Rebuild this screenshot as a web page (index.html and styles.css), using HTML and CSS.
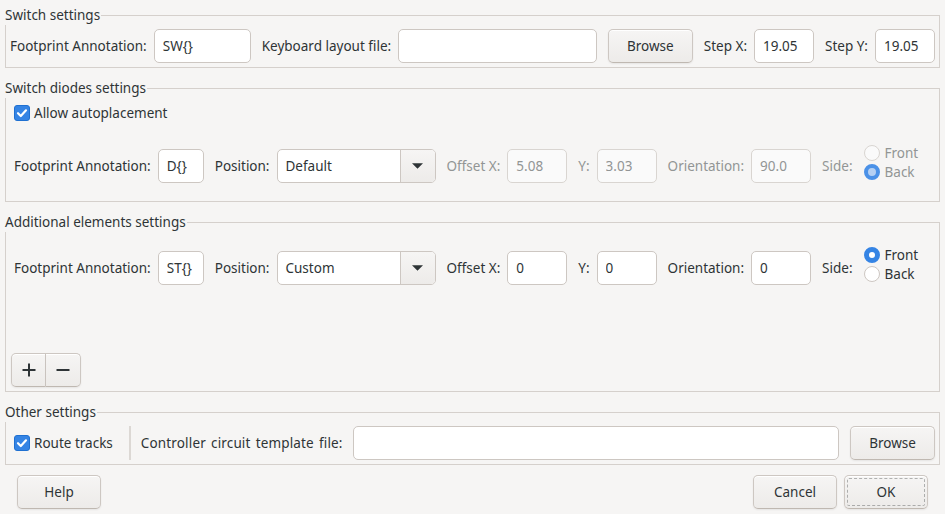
FILE: index.html
```html
<!DOCTYPE html>
<html lang="en">
<head>
<meta charset="utf-8">
<title>Keyboard layout settings</title>
<link rel="stylesheet" href="styles.css">
</head>
<body>
<div class="dialog">

  <fieldset class="group g-switch">
    <legend>Switch settings</legend>
    <div class="row">
      <label class="lbl">Footprint Annotation:</label>
      <input class="entry w-sw" type="text" value="SW{}">
      <label class="lbl">Keyboard layout file:</label>
      <input class="entry grow" type="text" value="">
      <button class="btn browse">Browse</button>
      <label class="lbl">Step X:</label>
      <input class="entry w-num" type="text" value="19.05">
      <label class="lbl">Step Y:</label>
      <input class="entry w-num last" type="text" value="19.05">
    </div>
  </fieldset>

  <fieldset class="group g-diodes">
    <legend>Switch diodes settings</legend>
    <div class="check-row">
      <span class="check"><svg viewBox="0 0 16 16" width="16" height="16"><path d="M4 8.2 L6.8 11 L12 5.3" fill="none" stroke="#fff" stroke-width="2.2" stroke-linecap="round" stroke-linejoin="round"/></svg></span>
      <span class="check-text">Allow autoplacement</span>
    </div>
    <div class="row diode-fields">
      <label class="lbl">Footprint Annotation:</label>
      <input class="entry w-ann" type="text" value="D{}">
      <label class="lbl">Position:</label>
      <div class="combo">
        <span class="combo-text">Default</span>
        <span class="combo-btn"><svg viewBox="0 0 12 6" width="12" height="6"><path d="M0 0 H12 L6 6 Z" fill="#2e3436"/></svg></span>
      </div>
      <label class="lbl dim">Offset X:</label>
      <input class="entry w-num" type="text" value="5.08" disabled>
      <label class="lbl dim">Y:</label>
      <input class="entry w-num" type="text" value="3.03" disabled>
      <label class="lbl dim">Orientation:</label>
      <input class="entry w-num" type="text" value="90.0" disabled>
      <label class="lbl dim">Side:</label>
      <div class="radios">
        <div class="radio-item dim"><span class="radio off-dis"></span>Front</div>
        <div class="radio-item dim"><span class="radio on-dis"></span>Back</div>
      </div>
    </div>
  </fieldset>

  <fieldset class="group g-extra">
    <legend>Additional elements settings</legend>
    <div class="row">
      <label class="lbl">Footprint Annotation:</label>
      <input class="entry w-ann" type="text" value="ST{}">
      <label class="lbl">Position:</label>
      <div class="combo">
        <span class="combo-text">Custom</span>
        <span class="combo-btn"><svg viewBox="0 0 12 6" width="12" height="6"><path d="M0 0 H12 L6 6 Z" fill="#2e3436"/></svg></span>
      </div>
      <label class="lbl">Offset X:</label>
      <input class="entry w-num" type="text" value="0">
      <label class="lbl">Y:</label>
      <input class="entry w-num" type="text" value="0">
      <label class="lbl">Orientation:</label>
      <input class="entry w-num" type="text" value="0">
      <label class="lbl">Side:</label>
      <div class="radios">
        <div class="radio-item"><span class="radio on"></span>Front</div>
        <div class="radio-item"><span class="radio off"></span>Back</div>
      </div>
    </div>
    <div class="linked">
      <button class="btn icon-btn first" aria-label="Add"><svg viewBox="0 0 16 16" width="16" height="16"><path d="M8 1.5 V14.5 M1.5 8 H14.5" stroke="#2e3436" stroke-width="2" fill="none"/></svg></button>
      <button class="btn icon-btn second" aria-label="Remove"><svg viewBox="0 0 16 16" width="16" height="16"><path d="M1.5 8 H14.5" stroke="#2e3436" stroke-width="2" fill="none"/></svg></button>
    </div>
  </fieldset>

  <fieldset class="group g-other">
    <legend>Other settings</legend>
    <div class="row">
      <div class="check-inline">
        <span class="check"><svg viewBox="0 0 16 16" width="16" height="16"><path d="M4 8.2 L6.8 11 L12 5.3" fill="none" stroke="#fff" stroke-width="2.2" stroke-linecap="round" stroke-linejoin="round"/></svg></span>
        <span class="check-text">Route tracks</span>
      </div>
      <span class="vsep"></span>
      <label class="lbl wide">Controller circuit template file:</label>
      <input class="entry grow" type="text" value="">
      <button class="btn browse last">Browse</button>
    </div>
  </fieldset>

  <div class="actions">
    <button class="btn action">Help</button>
    <span class="spacer"></span>
    <button class="btn action">Cancel</button>
    <button class="btn action ok">OK</button>
  </div>
</div>
</body>
</html>
```

FILE: styles.css
```css
* { box-sizing: border-box; }

html, body {
  margin: 0;
  padding: 0;
  background: #f6f5f4;
}

body {
  font-family: "Noto Sans", "DejaVu Sans", sans-serif;
  font-size: 13.5px;
  color: #2e3436;
}

.dialog {
  width: 945px;
  height: 514px;
  padding: 5px 5px 0 5px;
  display: flex;
  flex-direction: column;
}

.group {
  margin: 0 0 10px 0;
  padding: 4px 4px 4px 4px;
  border: 1px solid #d5d0cc;
  min-width: 0;
}

.group legend {
  padding: 0 1px 0 0;
  margin-left: -5px;
  height: 20px;
  line-height: 20px;
  font-size: 13.5px;
}

.g-diodes legend,
.g-extra legend,
.g-other legend { margin-left: -9px; }

.row {
  display: flex;
  align-items: center;
  height: 34px;
}

.lbl {
  white-space: nowrap;
  margin-right: 7px;
}
.lbl.wide {
  letter-spacing: 0.15px;
  word-spacing: 1.5px;
  margin-right: 10px;
}

.dim { color: #929595; }

.entry {
  height: 34px;
  border: 1px solid #cdc7c2;
  border-radius: 5px;
  background: #ffffff;
  font: inherit;
  color: #2e3436;
  padding: 0 8px;
  margin-right: 11px;
  outline: none;
}

.entry:disabled {
  background: #fafafa;
  border-color: #d9d5d1;
  color: #929595;
}

.entry.last, .btn.last { margin-right: 0; }

.w-sw { width: 97px; }
.w-ann { width: 46px; }
.w-num { width: 60px; }
.grow { flex: 1; min-width: 0; }

.btn {
  height: 34px;
  font: inherit;
  color: #2e3436;
  border: 1px solid #cdc7c2;
  border-bottom-color: #bfb8b1;
  border-radius: 5px;
  background: linear-gradient(to bottom, #f6f5f4, #edebe9);
  box-shadow: inset 0 1px #ffffff, 0 1px 2px rgba(0, 0, 0, 0.07);
  padding: 0 12px;
}

.browse {
  width: 85px;
  margin-right: 11px;
}

/* diodes section */
.g-diodes { padding: 5px 4px 18px 8px; }
.check-row {
  display: flex;
  align-items: center;
  height: 20px;
}
.diode-fields { margin-top: 26px; }

.check {
  width: 16px;
  height: 16px;
  border-radius: 3px;
  background: #3584e4;
  border: 1px solid #1f70d1;
  display: inline-flex;
  align-items: center;
  justify-content: center;
  flex: none;
}
.check svg { display: block; margin: -1px; }
.check-text { margin-left: 4px; }

.combo {
  display: flex;
  width: 159px;
  height: 34px;
  border: 1px solid #cdc7c2;
  border-radius: 5px;
  background: #fff;
  margin-right: 11px;
  overflow: hidden;
  flex: none;
}
.combo-text {
  flex: 1;
  display: flex;
  align-items: center;
  padding-left: 8px;
}
.combo-btn {
  width: 35px;
  border-left: 1px solid #cdc7c2;
  background: linear-gradient(to bottom, #f6f5f4, #edebe9);
  display: flex;
  align-items: center;
  justify-content: center;
}
.combo-btn svg { width: 11px; height: 6px; }

.radios {
  display: flex;
  flex-direction: column;
  margin-left: 4px;
  margin-bottom: 7px;
}
.radio-item {
  display: flex;
  align-items: center;
  height: 19px;
}
.radio {
  width: 16px;
  height: 16px;
  border-radius: 50%;
  margin-right: 5px;
  flex: none;
}
.radio.off {
  background: #fff;
  border: 1px solid #cdc7c2;
}
.radio.on {
  background: #fff;
  border: 5px solid #3584e4;
}
.radio.off-dis {
  background: #fafafa;
  border: 1px solid #d9d5d1;
}
.radio.on-dis {
  background: #b5d0f3;
  border: 4px solid #4b91e7;
}

/* extra section */
.g-extra { padding: 19px 4px 4px 8px; }
.linked {
  display: flex;
  margin-top: 68px;
  margin-left: -3px;
}
.icon-btn {
  width: 35px;
  height: 34px;
  padding: 0;
  display: flex;
  align-items: center;
  justify-content: center;
}
.icon-btn svg { width: 16px; height: 16px; }
.icon-btn.first { border-top-right-radius: 0; border-bottom-right-radius: 0; }
.icon-btn.second { border-top-left-radius: 0; border-bottom-left-radius: 0; border-left: none; width: 35px; }

/* other section */
.g-other { padding: 4px 4px 4px 8px; }
.check-inline {
  display: flex;
  align-items: center;
}
.vsep {
  width: 2px;
  height: 34px;
  background: #dcd8d4;
  margin: 0 10px 0 16px;
}

/* actions */
.actions {
  display: flex;
  align-items: center;
  padding: 0 12px;
}
.spacer { flex: 1; }
.action {
  width: 84px;
  height: 34px;
  padding: 0;
}
.action + .action { margin-left: 7px; }
.ok {
  outline: 1px dashed rgba(46, 52, 54, 0.35);
  outline-offset: -4px;
}
```
